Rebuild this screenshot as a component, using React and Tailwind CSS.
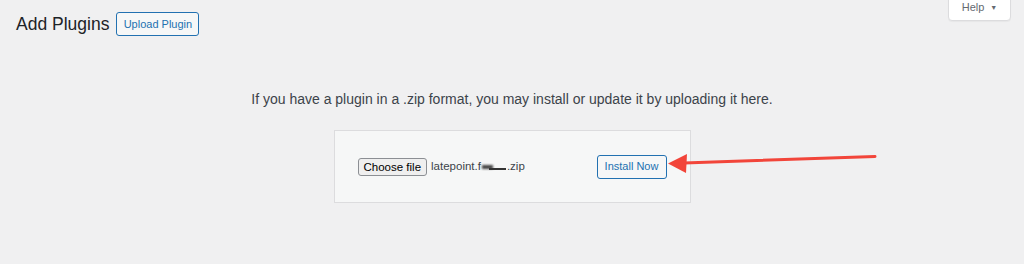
export default function App() {
  return (
    <div className="relative w-[1024px] h-[264px] overflow-hidden bg-[#f0f0f1] text-[#1d2327]" style={{ fontFamily: '"Liberation Sans", Arial, sans-serif' }}>
      <div className="flex items-start justify-between pl-4 pr-[13px]">
        <div className="flex items-center gap-2 pt-3">
          <h1 className="text-[17.5px] leading-[24px] font-normal text-[#1d2327]">Add Plugins</h1>
          <button className="ml-[-1px] h-6 w-[83px] rounded-[3px] border border-[#2271b1] bg-[#f6f7f7] text-[11px] text-[#2271b1]">Upload Plugin</button>
        </div>
        <div className="mt-[-6px] flex h-[27px] w-[63px] items-end justify-center gap-[6px] rounded-b-[4px] border border-[#dcdcde] bg-white pb-[5px] text-[11px] text-[#646970] shadow-[0_1px_1px_rgba(0,0,0,0.04)]">
          <span>Help</span>
          <span className="text-[7px] leading-[14px]">▼</span>
        </div>
      </div>
      <p className="mt-[54px] text-center text-[14px] leading-[18px] text-[#3c434a]">If you have a plugin in a .zip format, you may install or update it by uploading it here.</p>
      <div className="mx-auto mt-[22px] flex h-[73px] w-[357px] items-center border border-[#dcdcde] bg-[#f6f7f7] pl-[23px] pr-[23px]">
        <button className="h-[18px] rounded-[3px] border border-[#8c8f94] bg-[#efefef] px-[5px] text-[11.5px] leading-[16px] text-black">Choose file</button>
        <span className="ml-[4px] flex items-center text-[11.5px] text-[#3c434a]">
          latepoint.f
          <span className="relative mx-[1px] inline-block h-[10px] w-[24px]">
            <span className="absolute left-0 top-[3px] h-[4px] w-[11px] bg-[#444] blur-[1px]"></span>
            <span className="absolute left-[7px] top-[6px] h-[2px] w-[17px] bg-[#333] blur-[0.5px]"></span>
          </span>
          .zip
        </span>
        <button className="ml-auto h-6 w-[70px] rounded-[3px] border border-[#2271b1] bg-[#f6f7f7] text-[11px] text-[#2271b1]">Install Now</button>
      </div>
      <svg className="absolute left-[666px] top-[150px]" width="214" height="24" viewBox="0 0 214 24">
        <line x1="18" y1="13" x2="209" y2="6.5" stroke="#f2453a" strokeWidth="3" strokeLinecap="round" />
        <polygon points="2,13.5 21,4 20,23" fill="#f2453a" />
      </svg>
    </div>
  );
}
